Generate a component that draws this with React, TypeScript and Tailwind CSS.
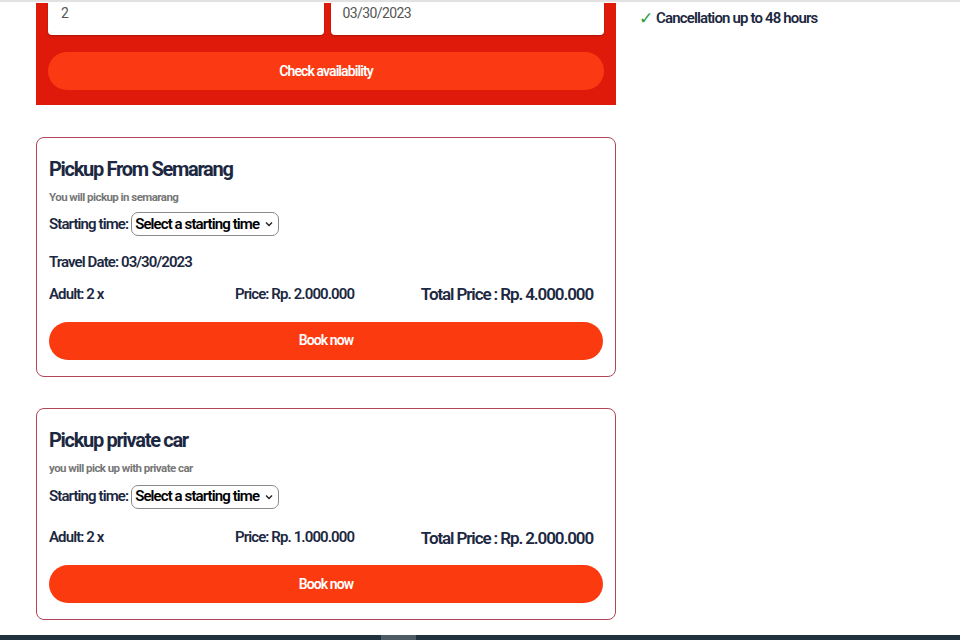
import React from "react";

const font = { fontFamily: "Roboto, 'Liberation Sans', sans-serif" };

function Card({
  title,
  subtitle,
  travelDate,
  price,
  total,
}: {
  title: string;
  subtitle: string;
  travelDate?: string;
  price: string;
  total: string;
}) {
  return (
    <div className="border border-[#b04657] rounded-lg px-3 pt-[18px] pb-[16px] bg-white">
      <h2 className="text-[20px] leading-[26px] font-bold text-[#1c2841] tracking-[-1.3px]">{title}</h2>
      <p className="mt-[8px] text-[11.5px] leading-[14px] font-bold text-[#777] tracking-[-0.55px]">{subtitle}</p>
      <div className={`${travelDate ? "mt-[8px]" : "mt-[10px]"} flex items-center gap-[3px] text-[15px] font-semibold text-[#1c2841] tracking-[-0.9px]`}>
        <span>Starting time:</span>
        <div className="flex items-center gap-[6px] border border-[#8a8a8a] rounded-[7px] px-[3px] h-[24px] text-black">
          <span>Select a starting time</span>
          <svg width="8" height="6" viewBox="0 0 8 6" className="mr-[2px]">
            <path d="M1 1.5 L4 4.5 L7 1.5" stroke="#222" strokeWidth="1.4" fill="none" />
          </svg>
        </div>
      </div>
      {travelDate ? (
        <div className="mt-[16px] text-[15px] leading-[20px] font-semibold text-[#1c2841] tracking-[-0.9px]">
          Travel Date: {travelDate}
        </div>
      ) : null}
      <div
        className={`${travelDate ? "mt-[9px]" : "mt-[16px]"} grid grid-cols-[186px_1fr_auto] items-center pr-[10px] text-[#1c2841]`}
      >
        <span className="text-[15px] font-semibold tracking-[-0.9px]">Adult: 2 x</span>
        <span className="text-[15px] font-semibold tracking-[-0.9px]">Price: {price}</span>
        <span className="text-[17px] font-semibold tracking-[-1.1px] translate-y-[1px]">Total Price : {total}</span>
      </div>
      <button className="mt-[15px] w-full h-[38px] rounded-full bg-[#fc3a10] text-white text-[14px] font-semibold tracking-[-0.9px]">
        Book now
      </button>
    </div>
  );
}

export default function App() {
  return (
    <div className="w-[960px] h-[640px] bg-white overflow-hidden flex flex-col" style={font}>
      <div className="h-[2px] bg-[#e2e2e2]" />
      <div className="flex-1 flex pl-[36px] pt-[1px]">
        <div className="w-[580px] flex flex-col">
          <div className="bg-[#df1a0b] px-[12px] pb-[15px]">
            <div className="flex gap-[7px]">
              <div className="flex-1 h-[32px] bg-white rounded-b-[4px] shadow-[0_1px_2px_rgba(0,0,0,0.25)] px-[13px] text-[14px] text-[#555]">
                2
              </div>
              <div className="flex-1 h-[32px] bg-white rounded-b-[4px] shadow-[0_1px_2px_rgba(0,0,0,0.25)] px-[12px] text-[14px] text-[#555] tracking-[-0.6px]">
                03/30/2023
              </div>
            </div>
            <button className="mt-[17px] w-full h-[38px] rounded-full bg-[#fb3a13] text-white text-[14px] font-semibold tracking-[-0.9px]">
              Check availability
            </button>
          </div>
          <div className="mt-[32px]">
            <Card
              title="Pickup From Semarang"
              subtitle="You will pickup in semarang"
              travelDate="03/30/2023"
              price="Rp. 2.000.000"
              total="Rp. 4.000.000"
            />
          </div>
          <div className="mt-[31px]">
            <Card
              title="Pickup private car"
              subtitle="you will pick up with private car"
              price="Rp. 1.000.000"
              total="Rp. 2.000.000"
            />
          </div>
        </div>
        <div className="ml-[23px] pt-[4px] flex items-center gap-[3px] self-start">
          <span className="text-[#2d9a3a] text-[17px] leading-[20px]">✓</span>
          <span className="text-[15px] font-semibold text-[#1c2841] tracking-[-0.85px]">Cancellation up to 48 hours</span>
        </div>
      </div>
      <div className="h-[5px] bg-[#1f323e] flex">
        <div className="w-[381px]" />
        <div className="w-[35px] bg-[#4c5b64]" />
      </div>
    </div>
  );
}
